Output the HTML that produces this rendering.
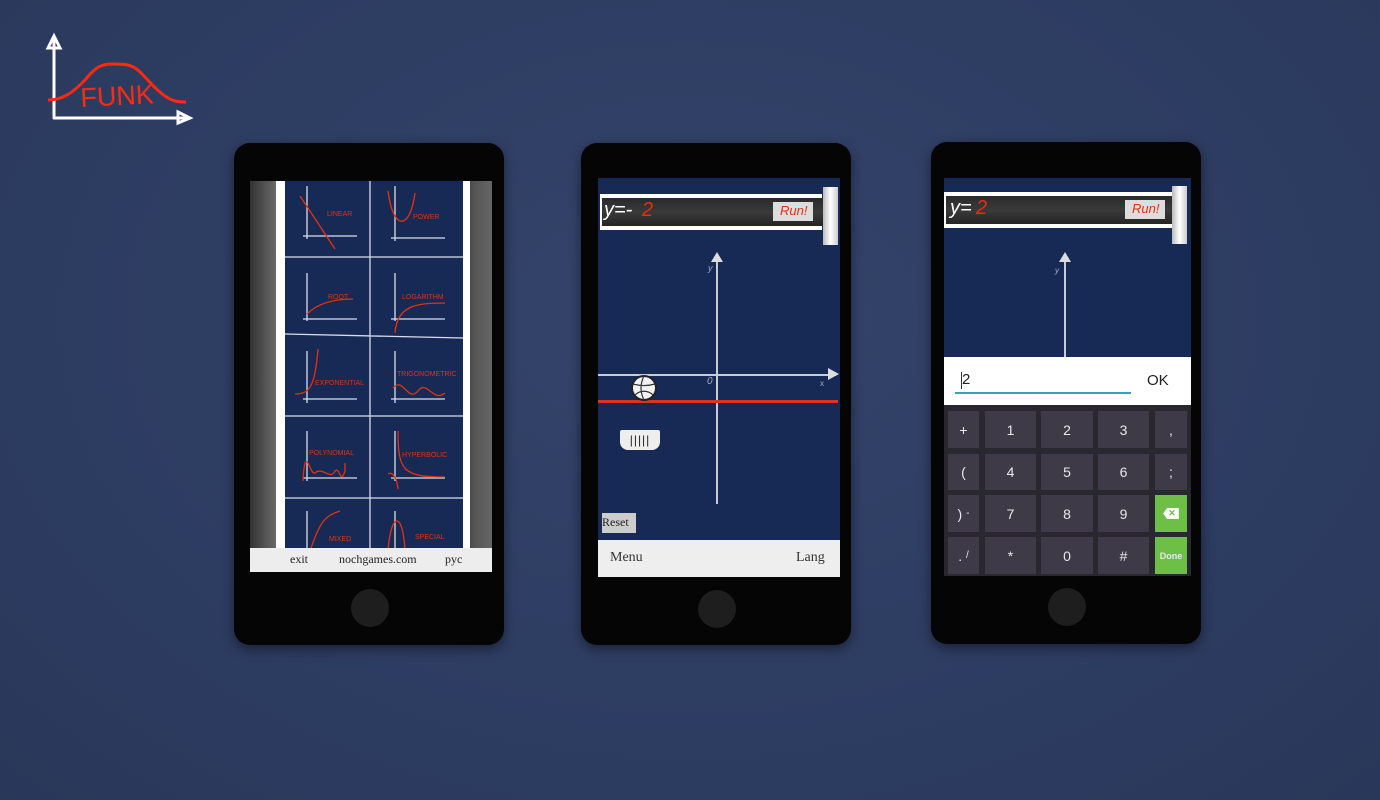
<!DOCTYPE html>
<html><head><meta charset="utf-8"><style>
*{margin:0;padding:0;box-sizing:border-box}
body{width:1380px;height:800px;overflow:hidden;background:radial-gradient(ellipse at 50% 40%,#34446a,#2c3b60 70%,#293759);font-family:"Liberation Sans",sans-serif;position:relative}
.abs{position:absolute}
.phone{position:absolute;background:#050505;border-radius:16px;width:270px;height:502px;box-shadow:0 4px 12px rgba(0,0,0,.45)}
.btn{position:absolute;width:38px;height:38px;border-radius:50%;background:#1e1e1e}
.scr{position:absolute;overflow:hidden;background:#172a55}
.hand{font-family:"Liberation Sans",sans-serif;font-style:italic}
.key{position:absolute;background:#3e3a48;color:#e8e8ec;font-size:14px;display:flex;align-items:center;justify-content:center}
</style></head><body>

<svg class="abs" style="left:40px;top:30px" width="160" height="100" viewBox="0 0 160 100">
<g stroke="#fff" stroke-width="3" fill="none" stroke-linecap="round">
<path d="M14 86 V8 M8 18 L14 6 L20 18 Z"/>
<path d="M14 88 H148 M138 82 L150 88 L138 93 Z"/>
</g>
<path d="M8 70 C25 70 35 60 45 50 C55 38 60 34 72 34 C85 34 92 34 100 42 C112 54 118 62 128 68 C135 72 140 72 146 72" stroke="#ff2a10" stroke-width="3" fill="none"/>
<text x="40" y="76" fill="#ff2a10" font-family="Liberation Sans" font-size="27" transform="rotate(-3 60 60)">FUNK</text>
</svg>

<div class="phone" style="left:234px;top:143px">
<div class="btn" style="left:117px;top:446px"></div>
<div class="scr" style="left:16px;top:38px;width:242px;height:391px;background:linear-gradient(90deg,#333,#666 10%,#7a7a7a 14%)">
 <div class="abs" style="left:213px;top:0;width:29px;height:391px;background:linear-gradient(90deg,#3a3a3a,#555 40%,#666)"></div>
 <div class="abs" style="left:26px;top:0;width:194px;height:370px;background:#fff"></div>
 <div class="abs" style="left:35px;top:0;width:178px;height:370px;background:#172a55">
  <svg width="178" height="370" viewBox="0 0 178 370" style="position:absolute;left:0;top:0">
   <g stroke="#d8dde8" stroke-width="1.3" fill="none">
    <path d="M85 0 V370 M0 76 H178 M0 153 L178 157 M0 235 H178 M0 317 H178"/>
    <path d="M22 5 V58 M18 55 H72"/><path d="M110 5 V60 M106 57 H160"/>
    <path d="M22 92 V140 M18 138 H72"/><path d="M110 92 V140 M106 138 H160"/>
    <path d="M22 170 V222 M18 218 H72"/><path d="M110 170 V222 M106 218 H160"/>
    <path d="M22 250 V300 M18 297 H72"/><path d="M110 250 V300 M106 297 H160"/>
    <path d="M22 330 V370 M110 330 V370"/>
   </g>
   <g stroke="#e53010" stroke-width="1.3" fill="none">
    <path d="M15 15 L50 68"/><path d="M103 10 C108 50 125 50 130 12"/>
    <path d="M22 133 C35 120 55 118 68 118"/><path d="M110 152 C112 125 130 122 160 122"/>
    <path d="M10 213 C25 213 30 205 33 168"/><path d="M108 207 C118 195 123 222 133 210 C142 198 148 222 160 212"/>
    <path d="M18 300 C20 260 25 295 30 292 C38 285 45 300 50 290 C55 285 55 305 60 290 V282"/><path d="M113 250 C113 290 118 296 160 296 M103 293 C108 290 112 298 113 308"/>
    <path d="M25 370 C35 340 40 335 55 330"/><path d="M103 370 C106 330 118 330 120 370"/>
   </g>
   <g fill="#e53010" font-family="Liberation Sans" font-size="7">
    <text x="42" y="35">LINEAR</text><text x="128" y="38">POWER</text>
    <text x="43" y="118">ROOT</text><text x="117" y="118">LOGARITHM</text>
    <text x="30" y="204">EXPONENTIAL</text><text x="112" y="195">TRIGONOMETRIC</text>
    <text x="24" y="274">POLYNOMIAL</text><text x="117" y="276">HYPERBOLIC</text>
    <text x="44" y="360">MIXED</text><text x="130" y="358">SPECIAL</text>
   </g>
  </svg>
 </div>
 <div class="abs" style="left:0;top:367px;width:242px;height:24px;background:#ededed;font-size:12px;color:#222;font-family:'Liberation Serif',serif">
  <span class="abs" style="left:40px;top:4px">exit</span>
  <span class="abs" style="left:89px;top:4px">nochgames.com</span>
  <span class="abs" style="left:195px;top:4px">pyc</span>
 </div>
</div>
</div>

<div class="phone" style="left:581px;top:143px">
<div class="btn" style="left:117px;top:447px"></div>
<div class="scr" style="left:17px;top:35px;width:242px;height:399px">
 <div class="abs" style="left:2px;top:16px;width:222px;height:36px;background:#fff"></div>
 <div class="abs" style="left:4px;top:20px;width:222px;height:28px;background:linear-gradient(#2a2a2a,#3a3a3a 50%,#252525)"></div>
 <span class="abs hand" style="left:6px;top:21px;color:#fff;font-size:20px">y=-</span><span class="abs hand" style="left:44px;top:21px;color:#e53010;font-size:20px">2</span>
 <div class="abs" style="left:175px;top:24px;width:40px;height:19px;background:#ddd;color:#e53010;font-size:13px;font-style:italic;padding:1px 0 0 7px">Run!</div>
 <div class="abs" style="left:225px;top:9px;width:15px;height:58px;background:linear-gradient(90deg,#bbb,#fff,#ccc)"></div>
 <div class="abs" style="left:118px;top:78px;width:1.5px;height:248px;background:#c8ccd8"></div>
 <div class="abs" style="left:113px;top:74px;width:0;height:0;border-left:6px solid transparent;border-right:6px solid transparent;border-bottom:10px solid #ddd"></div>
 <div class="abs" style="left:0;top:196px;width:238px;height:1.5px;background:#c8ccd8"></div>
 <div class="abs" style="left:230px;top:190px;width:0;height:0;border-top:6px solid transparent;border-bottom:6px solid transparent;border-left:11px solid #ddd"></div>
 <span class="abs" style="left:110px;top:85px;color:#aab;font-size:9px;font-style:italic">y</span>
 <span class="abs" style="left:109px;top:198px;color:#aab;font-size:10px;font-style:italic">0</span>
 <span class="abs" style="left:222px;top:201px;color:#aab;font-size:8px">x</span>
 <div class="abs" style="left:0;top:222px;width:240px;height:3px;background:#e0331a"></div>
 <svg class="abs" style="left:32px;top:196px" width="28" height="28" viewBox="0 0 28 28"><circle cx="14" cy="14" r="12" fill="#f2f2f2" stroke="#222" stroke-width="2"/><path d="M14 2 C10 10 10 18 14 26 M3 10 C10 12 18 12 25 10 M5 21 C10 16 18 16 23 21" stroke="#333" stroke-width="1.2" fill="none"/></svg>
 <div class="abs" style="left:22px;top:252px;width:40px;height:20px;background:#eee;border-radius:2px 2px 8px 8px;font-size:12px;color:#222;text-align:center;letter-spacing:1px;line-height:20px">|||||</div>
 <div class="abs" style="left:4px;top:335px;width:34px;height:20px;background:#ccc;color:#222;font-size:12px;padding-top:2px;font-family:'Liberation Serif',serif">Reset</div>
 <div class="abs" style="left:0;top:362px;width:242px;height:37px;background:#eee;color:#333;font-size:14px;font-family:'Liberation Serif',serif">
  <span class="abs" style="left:12px;top:10px">Menu</span><span class="abs" style="left:198px;top:10px">Lang</span>
 </div>
</div>
</div>

<div class="phone" style="left:931px;top:142px">
<div class="btn" style="left:117px;top:446px"></div>
<div class="scr" style="left:13px;top:36px;width:247px;height:398px">
 <div class="abs" style="left:0;top:14px;width:228px;height:36px;background:#fff"></div>
 <div class="abs" style="left:2px;top:18px;width:226px;height:28px;background:linear-gradient(#2a2a2a,#3a3a3a 50%,#252525)"></div>
 <span class="abs hand" style="left:6px;top:19px;color:#fff;font-size:20px">y=</span><span class="abs hand" style="left:32px;top:19px;color:#e53010;font-size:20px">2</span>
 <div class="abs" style="left:181px;top:22px;width:40px;height:19px;background:#ddd;color:#e53010;font-size:13px;font-style:italic;padding:1px 0 0 7px">Run!</div>
 <div class="abs" style="left:228px;top:8px;width:15px;height:58px;background:linear-gradient(90deg,#bbb,#fff,#ccc)"></div>
 <div class="abs" style="left:120px;top:80px;width:1.5px;height:110px;background:#c8ccd8"></div>
 <div class="abs" style="left:115px;top:74px;width:0;height:0;border-left:6px solid transparent;border-right:6px solid transparent;border-bottom:10px solid #ddd"></div>
 <span class="abs" style="left:111px;top:88px;color:#aab;font-size:8px;font-style:italic">y</span>
 <div class="abs" style="left:0;top:179px;width:247px;height:48px;background:#fff">
  <span class="abs" style="left:18px;top:14px;font-size:15px;color:#222">2</span>
  <div class="abs" style="left:17px;top:15px;width:1px;height:17px;background:#333"></div>
  <div class="abs" style="left:11px;top:35px;width:176px;height:1.5px;background:#3aa0b8"></div>
  <span class="abs" style="left:203px;top:15px;font-size:15px;color:#222">OK</span>
 </div>
 <div class="abs" style="left:0;top:227px;width:247px;height:171px;background:#29272f">
  <div class="key" style="left:4px;top:6px;width:31px;height:37px">+</div>
  <div class="key" style="left:41px;top:6px;width:51px;height:37px">1</div>
  <div class="key" style="left:97px;top:6px;width:52px;height:37px">2</div>
  <div class="key" style="left:154px;top:6px;width:51px;height:37px">3</div>
  <div class="key" style="left:211px;top:6px;width:32px;height:37px">,</div>
  <div class="key" style="left:4px;top:49px;width:31px;height:36px">(</div>
  <div class="key" style="left:41px;top:49px;width:51px;height:36px">4</div>
  <div class="key" style="left:97px;top:49px;width:52px;height:36px">5</div>
  <div class="key" style="left:154px;top:49px;width:51px;height:36px">6</div>
  <div class="key" style="left:211px;top:49px;width:32px;height:36px">;</div>
  <div class="key" style="left:4px;top:90px;width:31px;height:37px">)&nbsp;<sup style="font-size:10px">-</sup></div>
  <div class="key" style="left:41px;top:90px;width:51px;height:37px">7</div>
  <div class="key" style="left:97px;top:90px;width:52px;height:37px">8</div>
  <div class="key" style="left:154px;top:90px;width:51px;height:37px">9</div>
  <div class="key" style="left:211px;top:90px;width:32px;height:37px;background:#6dbf45"><span style="display:inline-block;background:#fff;color:#6dbf45;font-size:9px;font-weight:bold;padding:0 3px 0 5px;clip-path:polygon(25% 0,100% 0,100% 100%,25% 100%,0 50%)">✕</span></div>
  <div class="key" style="left:4px;top:132px;width:31px;height:37px">.&nbsp;<sup style="font-size:10px">/</sup></div>
  <div class="key" style="left:41px;top:132px;width:51px;height:37px">*</div>
  <div class="key" style="left:97px;top:132px;width:52px;height:37px">0</div>
  <div class="key" style="left:154px;top:132px;width:51px;height:37px">#</div>
  <div class="key" style="left:211px;top:132px;width:32px;height:37px;background:#6dbf45;font-size:9px;font-weight:bold">Done</div>
 </div>
</div>
</div>
</body></html>
